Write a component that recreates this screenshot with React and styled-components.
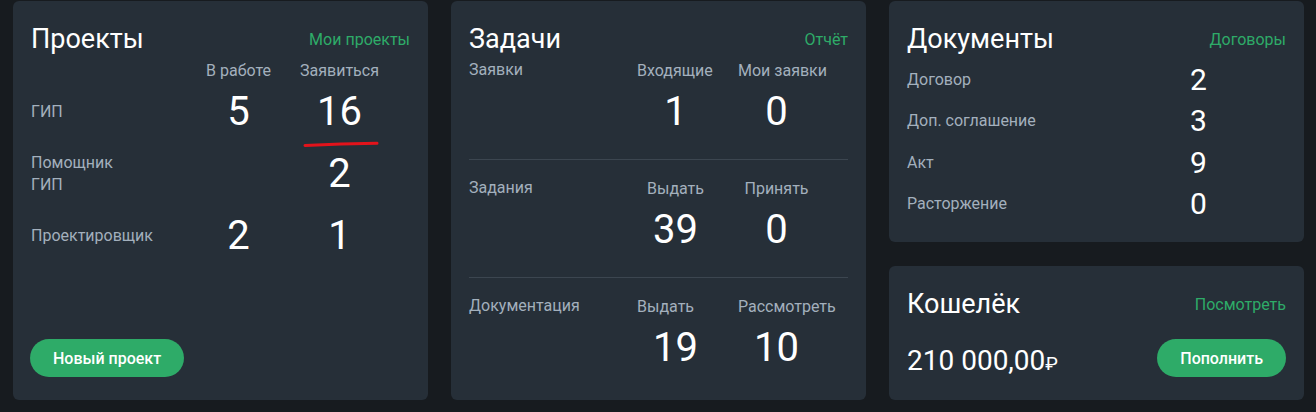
import React from "react";
import styled, { createGlobalStyle, css } from "styled-components";

const GlobalStyle = createGlobalStyle`
  html, body {
    margin: 0;
    background: #171b1f;
  }
  body {
    font-family: Roboto, "Noto Sans", "DejaVu Sans", sans-serif;
  }
`;

const GREEN = "#2eab68";
const LABEL = "#a3b0bd";

const Page = styled.div`
  display: grid;
  grid-template-columns: repeat(3, 415px);
  grid-template-rows: 399px;
  column-gap: 23px;
  padding: 1px 12px 12px 13px;
  box-sizing: border-box;
  height: 412px;
`;

const Card = styled.section`
  background: #262f38;
  border-radius: 6px;
  padding: 22px 18px 23px;
  display: flex;
  flex-direction: column;
  box-sizing: border-box;
  ${(p) => p.$height && css`height: ${p.$height}px;`}
  ${(p) => p.$grow && css`flex: 1;`}
`;

const SideColumn = styled.div`
  display: flex;
  flex-direction: column;
  gap: 24px;
`;

const CardHeader = styled.header`
  display: flex;
  justify-content: space-between;
  align-items: center;
  height: 32px;
`;

const Title = styled.h2`
  margin: 0;
  font-size: 27px;
  font-weight: 400;
  line-height: 32px;
  color: #fff;
`;

const HeaderLink = styled.a`
  color: ${GREEN};
  font-size: 16px;
  text-decoration: none;
  cursor: pointer;
`;

/* Проекты */
const ProjectTable = styled.div`
  display: grid;
  grid-template-columns: 157px 101px 101px;
  grid-template-rows: 29px 54px 70px 54px;
  align-items: center;
  margin-top: 1px;
`;

const ColHead = styled.div`
  font-size: 16px;
  color: ${LABEL};
  text-align: ${(p) => (p.$centered ? "center" : "left")};
  padding-left: ${(p) => (p.$centered ? 0 : 12)}px;
`;

const RowLabel = styled.div`
  font-size: 16px;
  line-height: 22px;
  color: ${LABEL};
`;

const Num = styled.div`
  position: relative;
  font-size: ${(p) => p.$size || 40}px;
  line-height: 1;
  color: #fff;
  text-align: ${(p) => (p.$left ? "left" : "center")};
`;

const Underline = styled.svg`
  position: absolute;
  left: 14px;
  top: 47px;
  width: 76px;
  height: 10px;
  overflow: visible;
`;

const GreenButton = styled.button`
  height: 38px;
  padding: 0 23px;
  border: none;
  border-radius: 19px;
  background: ${GREEN};
  color: #fff;
  font-family: inherit;
  font-size: 16px;
  font-weight: 500;
  cursor: pointer;
`;

const BottomLeft = styled.div`
  margin-top: auto;
  display: flex;
  margin-left: -1px;
`;

/* Задачи */
const TaskSection = styled.div`
  display: grid;
  grid-template-columns: 156px 101px 101px;
  grid-template-rows: 24px 48px;
  row-gap: 6px;
  align-items: center;
  padding: ${(p) => (p.$first ? 3 : 16)}px 0 23px;
  ${(p) =>
    !p.$first &&
    css`
      border-top: 1px solid #3c4650;
    `}
`;

/* Документы */
const DocList = styled.div`
  display: grid;
  grid-template-columns: 283px auto;
  grid-auto-rows: 41.5px;
  align-items: center;
  margin-top: 4px;
`;

/* Кошелёк */
const WalletRow = styled.div`
  margin-top: auto;
  display: flex;
  justify-content: space-between;
  align-items: center;
`;

const Amount = styled.div`
  font-size: 28px;
  color: #fff;
  margin-top: 4px;
`;

const Rub = styled.span`
  font-size: 19px;
`;

const tasks = [
  { label: "Заявки", heads: ["Входящие", "Мои заявки"], values: [1, 0] },
  { label: "Задания", heads: ["Выдать", "Принять"], values: [39, 0], centered: true },
  { label: "Документация", heads: ["Выдать", "Рассмотреть"], values: [19, 10] },
];

const docs = [
  ["Договор", 2],
  ["Доп. соглашение", 3],
  ["Акт", 9],
  ["Расторжение", 0],
];

export default function App() {
  return (
    <>
      <GlobalStyle />
      <Page>
        <Card>
          <CardHeader>
            <Title>Проекты</Title>
            <HeaderLink>Мои проекты</HeaderLink>
          </CardHeader>
          <ProjectTable>
            <div />
            <ColHead $centered>В работе</ColHead>
            <ColHead $centered>Заявиться</ColHead>

            <RowLabel>ГИП</RowLabel>
            <Num>5</Num>
            <Num>
              16
              <Underline viewBox="0 0 76 10">
                <path
                  d="M2 6.5 Q 38 4.6 74 4.2"
                  fill="none"
                  stroke="#e3131b"
                  strokeWidth="3"
                  strokeLinecap="round"
                />
              </Underline>
            </Num>

            <RowLabel>
              Помощник
              <br />
              ГИП
            </RowLabel>
            <div />
            <Num>2</Num>

            <RowLabel>Проектировщик</RowLabel>
            <Num>2</Num>
            <Num>1</Num>
          </ProjectTable>
          <BottomLeft>
            <GreenButton>Новый проект</GreenButton>
          </BottomLeft>
        </Card>

        <Card>
          <CardHeader>
            <Title>Задачи</Title>
            <HeaderLink>Отчёт</HeaderLink>
          </CardHeader>
          {tasks.map((t, i) => (
            <TaskSection key={t.label} $first={i === 0}>
              <RowLabel>{t.label}</RowLabel>
              <ColHead $centered={t.centered}>{t.heads[0]}</ColHead>
              <ColHead $centered={t.centered}>{t.heads[1]}</ColHead>
              <div />
              <Num>{t.values[0]}</Num>
              <Num>{t.values[1]}</Num>
            </TaskSection>
          ))}
        </Card>

        <SideColumn>
          <Card $height={241}>
            <CardHeader>
              <Title>Документы</Title>
              <HeaderLink>Договоры</HeaderLink>
            </CardHeader>
            <DocList>
              {docs.map(([label, n]) => (
                <React.Fragment key={label}>
                  <RowLabel>{label}</RowLabel>
                  <Num $size={30} $left>
                    {n}
                  </Num>
                </React.Fragment>
              ))}
            </DocList>
          </Card>
          <Card $grow>
            <CardHeader>
              <Title>Кошелёк</Title>
              <HeaderLink>Посмотреть</HeaderLink>
            </CardHeader>
            <WalletRow>
              <Amount>
                210 000,00<Rub>₽</Rub>
              </Amount>
              <GreenButton>Пополнить</GreenButton>
            </WalletRow>
          </Card>
        </SideColumn>
      </Page>
    </>
  );
}
